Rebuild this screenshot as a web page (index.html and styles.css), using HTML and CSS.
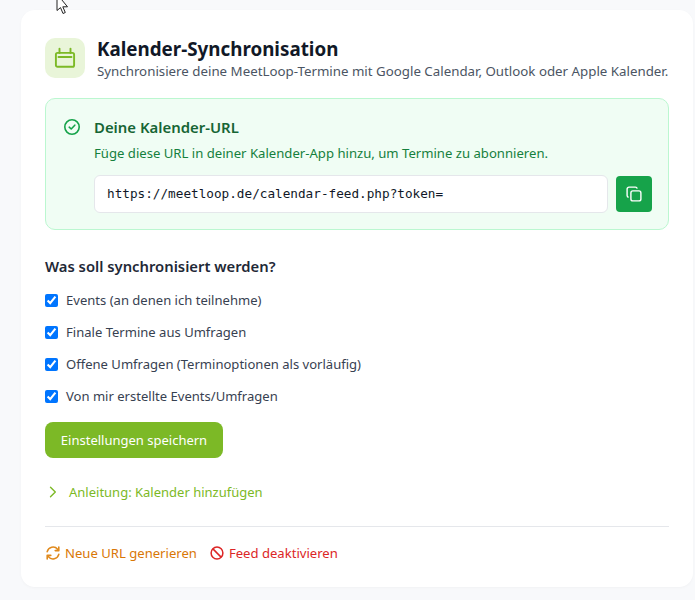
FILE: index.html
```html
<!DOCTYPE html>
<html lang="de">
<head>
<meta charset="utf-8">
<title>Kalender-Synchronisation</title>
<link rel="stylesheet" href="styles.css">
</head>
<body>
<svg class="cursor" width="14" height="16" viewBox="0 0 14 16"><path d="M1 -6V10.5L4.5 7.6L7 13.5L9.3 12.5L6.8 6.8H11.5Z" fill="#fff" stroke="#222" stroke-width="1"/></svg>
<main class="card">
  <header class="head">
    <div class="head-icon">
      <svg width="22" height="22" viewBox="0 0 22 22" fill="none" stroke="#7cb926" stroke-width="1.9" stroke-linecap="round" stroke-linejoin="round"><rect x="1.9" y="5.9" width="18.2" height="13.9" rx="1.6"/><path d="M5.5 1.6V6M16.5 1.6V6M4.5 10H17.5"/></svg>
    </div>
    <div class="head-text">
      <h1 class="title">Kalender-Synchronisation</h1>
      <p class="sub">Synchronisiere deine MeetLoop-Termine mit Google Calendar, Outlook oder Apple Kalender.</p>
    </div>
  </header>

  <section class="url-box">
    <svg class="check" width="18" height="18" viewBox="0 0 18 18" fill="none" stroke="#16a34a" stroke-width="1.6" stroke-linecap="round" stroke-linejoin="round"><circle cx="9" cy="9" r="7.2"/><path d="M6.2 9.2L8.2 11L11.8 7.2"/></svg>
    <div class="url-main">
      <h2 class="url-title">Deine Kalender-URL</h2>
      <p class="url-text">Füge diese URL in deiner Kalender-App hinzu, um Termine zu abonnieren.</p>
      <div class="url-row">
        <div class="url-input">https://meetloop.de/calendar-feed.php?token=</div>
        <button class="copy" aria-label="Kopieren">
          <svg width="16" height="16" viewBox="0 0 16 16" fill="none" stroke="#fff" stroke-width="1.4" stroke-linejoin="round"><rect x="4.9" y="4.9" width="10" height="10" rx="2"/><path d="M2.6 11.2A1.9 1.9 0 0 1 1.1 9.4V3A1.9 1.9 0 0 1 3 1.1H9.4A1.9 1.9 0 0 1 11.2 2.6"/></svg>
        </button>
      </div>
    </div>
  </section>

  <h3 class="opt-title">Was soll synchronisiert werden?</h3>
  <div class="opts">
    <label class="opt"><input type="checkbox" checked>Events (an denen ich teilnehme)</label>
    <label class="opt"><input type="checkbox" checked>Finale Termine aus Umfragen</label>
    <label class="opt"><input type="checkbox" checked>Offene Umfragen (Terminoptionen als vorläufig)</label>
    <label class="opt"><input type="checkbox" checked>Von mir erstellte Events/Umfragen</label>
  </div>
  <button class="save">Einstellungen speichern</button>

  <div class="guide">
    <svg width="8" height="12" viewBox="0 0 8 12" fill="none" stroke="#7cb926" stroke-width="1.4" stroke-linecap="round" stroke-linejoin="round"><path d="M1.5 1.2L6.3 6L1.5 10.8"/></svg>
    <span>Anleitung: Kalender hinzufügen</span>
  </div>

  <footer class="foot">
    <a class="act orange">
      <svg width="14" height="14" viewBox="0 0 14 14" fill="none" stroke="#e08a1e" stroke-width="1.6" stroke-linecap="round" stroke-linejoin="round"><path d="M1.2 5.6A6 6 0 0 1 11.6 3.2L12.8 4.6M12.8 1V4.6H9.2"/><path d="M12.8 8.4A6 6 0 0 1 2.4 10.8L1.2 9.4M1.2 13V9.4H4.8"/></svg>
      Neue URL generieren</a>
    <a class="act red">
      <svg width="14" height="14" viewBox="0 0 14 14" fill="none" stroke="#dc2626" stroke-width="1.5"><circle cx="7" cy="7" r="5.9"/><path d="M2.9 2.9L11.1 11.1"/></svg>
      Feed deaktivieren</a>
  </footer>
</main>
</body>
</html>
```

FILE: styles.css
```css
* { box-sizing: border-box; }
html, body { margin: 0; height: 600px; overflow: hidden; }
body {
  background: #f8f9fb;
  font-family: "Noto Sans", "Open Sans", sans-serif;
  padding: 10px 2px 0 21px;
}
.cursor { position: absolute; left: 56px; top: 0; }
.card {
  background: #fff;
  border-radius: 14px;
  height: 577px;
  padding: 28px 24px 0;
  box-shadow: 0 1px 3px rgba(0,0,0,.03);
}
.head { display: flex; gap: 12px; height: 40px; }
.head-icon {
  width: 40px; height: 40px; border-radius: 10px;
  background: #e9f5d9;
  display: flex; align-items: center; justify-content: center;
}
.title { margin: -1px 0 0; font-size: 18.8px; line-height: 24px; font-weight: 700; color: #111827; }
.sub { margin: 2px 0 0; font-size: 13.3px; line-height: 17px; color: #4b5563; }
.url-box {
  margin: 20px 0 0;
  width: 624px; height: 132px;
  border: 1px solid #bbf7d0;
  border-radius: 10px;
  background: #f0fdf4;
  padding: 18px 16px 0 17px;
  display: flex; gap: 13px;
}
.check { margin-top: 1px; flex: none; }
.url-main { flex: 1; }
.url-title { margin: 0; font-size: 14.9px; line-height: 20px; font-weight: 600; color: #166534; }
.url-text { margin: 7px 0 0; font-size: 13.13px; line-height: 18px; color: #15803d; }
.url-row { display: flex; gap: 8px; margin-top: 13px; }
.url-input {
  flex: 1; height: 38px;
  background: #fff; border: 1px solid #e5e7eb; border-radius: 6px;
  font-family: "DejaVu Sans Mono", monospace; font-size: 12.7px; line-height: 36px;
  color: #111827; padding-left: 12px;
}
.copy {
  width: 36px; height: 36px; margin-top: 1px; border: 0; border-radius: 4px;
  background: #16a34a; padding: 0;
  display: flex; align-items: center; justify-content: center;
}
.opt-title { margin: 26px 0 0; font-size: 14.8px; line-height: 20px; font-weight: 600; color: #1f2937; }
.opts { display: flex; flex-direction: column; gap: 12px; margin-top: 14px; }
.opt { display: flex; align-items: center; gap: 8px; height: 20px; font-size: 13.05px; color: #374151; }
.opt input { width: 13px; height: 13px; margin: 0; accent-color: #0075ff; }
.save {
  display: block; margin-top: 16px;
  width: 178px; height: 36px; border: 0; border-radius: 8px;
  background: #7cb926; color: #fff;
  font: 400 13px/36px "Noto Sans", sans-serif; padding: 0;
}
.guide { display: flex; align-items: center; gap: 12px; margin-top: 24px; padding-left: 4px; height: 20px; font-size: 13px; color: #7cb926; }
.foot {
  margin-top: 24px; border-top: 1px solid #e5e7eb; padding-top: 17px;
  display: flex; gap: 13px; font-size: 13.1px; line-height: 18px;
}
.act { display: flex; align-items: center; gap: 5px; }
.orange { color: #d97706; }
.orange svg { margin-left: 1px; }
.red { color: #dc2626; }
```
